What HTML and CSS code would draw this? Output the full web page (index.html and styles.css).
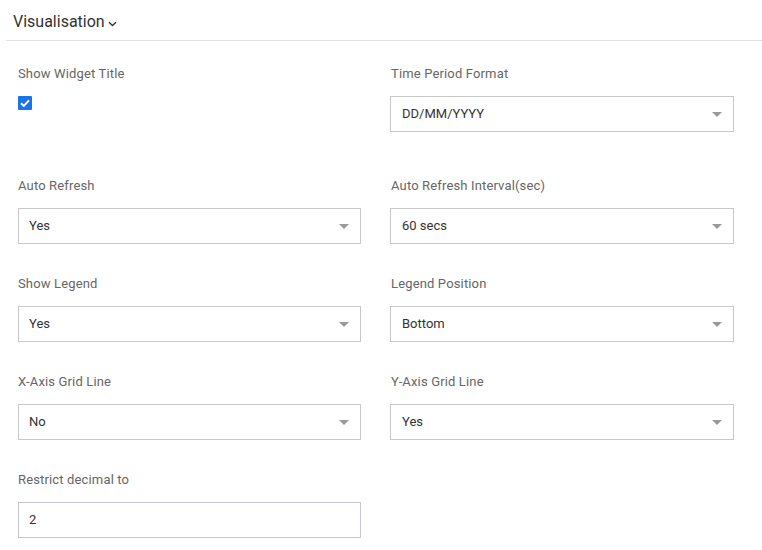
FILE: index.html
```html
<!DOCTYPE html>
<html>
<head>
<meta charset="utf-8">
<link rel="stylesheet" href="styles.css">
</head>
<body>
<div class="panel">
  <div class="header">
    <span class="title">Visualisation</span>
    <svg class="chev" width="9" height="6" viewBox="0 0 9 6"><path d="M1 1.2 L4.5 4.6 L8 1.2" fill="none" stroke="#333" stroke-width="1.4"/></svg>
  </div>
  <div class="form">
    <div class="field first">
      <div class="label">Show Widget Title</div>
      <span class="check"><svg width="14" height="14" viewBox="0 0 14 14"><path d="M3 7.2 L5.8 9.9 L11 4.4" fill="none" stroke="#fff" stroke-width="2"/></svg></span>
    </div>
    <div class="field first">
      <div class="label">Time Period Format</div>
      <div class="select"><span>DD/MM/YYYY</span><i class="caret"></i></div>
    </div>
    <div class="field">
      <div class="label">Auto Refresh</div>
      <div class="select"><span>Yes</span><i class="caret"></i></div>
    </div>
    <div class="field">
      <div class="label">Auto Refresh Interval(sec)</div>
      <div class="select"><span>60 secs</span><i class="caret"></i></div>
    </div>
    <div class="field">
      <div class="label">Show Legend</div>
      <div class="select"><span>Yes</span><i class="caret"></i></div>
    </div>
    <div class="field">
      <div class="label">Legend Position</div>
      <div class="select"><span>Bottom</span><i class="caret"></i></div>
    </div>
    <div class="field">
      <div class="label">X-Axis Grid Line</div>
      <div class="select"><span>No</span><i class="caret"></i></div>
    </div>
    <div class="field">
      <div class="label">Y-Axis Grid Line</div>
      <div class="select"><span>Yes</span><i class="caret"></i></div>
    </div>
    <div class="field">
      <div class="label">Restrict decimal to</div>
      <div class="input"><span>2</span></div>
    </div>
  </div>
</div>
</body>
</html>
```
FILE: styles.css
```css
html, body {
  margin: 0;
  padding: 0;
  background: #fff;
}
body {
  font-family: Roboto, "Liberation Sans", sans-serif;
  color: #333;
}
.panel {
  padding-left: 6px;
}
.header {
  border-bottom: 1px solid #e0e0e0;
  display: flex;
  align-items: center;
  padding-left: 7px;
  box-sizing: border-box;
  height: 41px;
}
.title {
  font-size: 16px;
  color: #333;
  line-height: 20px;
  margin-top: 4px;
}
.chev {
  margin-left: 3px;
  margin-top: 7px;
}
.form {
  display: grid;
  grid-template-columns: 343px 344px;
  column-gap: 29px;
  row-gap: 32px;
  padding-left: 12px;
  padding-top: 25px;
}
.field.first {
  margin-bottom: 14px;
}
.label {
  font-size: 13px;
  line-height: 16px;
  color: #666;
  letter-spacing: 0.15px;
  margin-bottom: 14px;
}
.field:nth-child(even) .label {
  padding-left: 1px;
}
.check {
  display: block;
  width: 14px;
  height: 14px;
  background: #1a73e8;
  border-radius: 1px;
}
.check svg {
  display: block;
}
.select, .input {
  height: 36px;
  box-sizing: border-box;
  border: 1px solid #c8c8c8;
  display: flex;
  align-items: center;
  justify-content: space-between;
  padding: 0 11px 1px 10px;
  font-size: 13px;
  color: #333;
}
.select span, .input span {
  padding-left: 1px;
}
.field:nth-child(odd) .select span, .field:nth-child(odd) .input span {
  padding-left: 0;
}
.input {
  border-color: #c6c4d8;
}
.caret {
  width: 0;
  height: 0;
  border-left: 5px solid transparent;
  border-right: 5px solid transparent;
  border-top: 5px solid #999;
  margin-top: 1px;
}
```
